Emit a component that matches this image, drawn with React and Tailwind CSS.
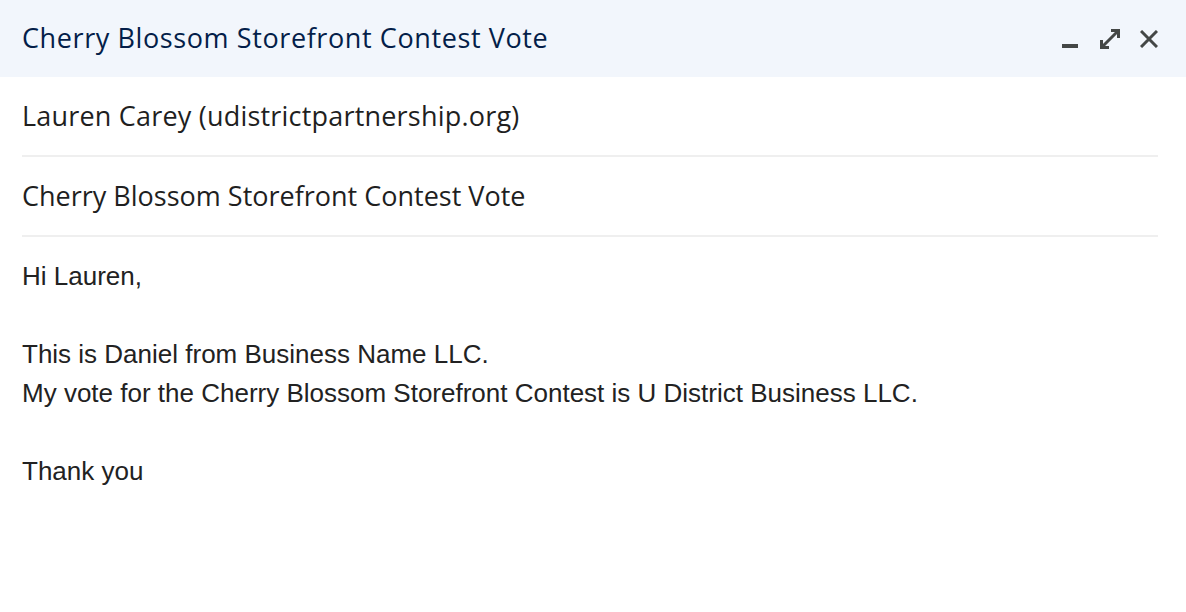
export default function App() {
  return (
    <div className="w-[1186px] h-[612px] bg-white overflow-hidden">
      <div className="h-[77px] bg-[#f2f6fc] flex items-center justify-between pl-[22px] pr-[28px]">
        <div className="text-[27px] text-[#041e49] font-['Open_Sans',sans-serif] tracking-[0.6px]">Cherry Blossom Storefront Contest Vote</div>
        <div className="flex items-center text-[#444746]">
          <svg className="mr-[22px]" width="16" height="20" viewBox="0 0 16 20"><rect x="0" y="15" width="16" height="4" fill="#444746" /></svg>
          <svg className="mr-[20px]" width="20" height="20" viewBox="0 0 20 20" fill="none" stroke="#444746" strokeWidth="3">
            <path d="M2 18 L18 2" />
            <path d="M11 1.5 H18.5 V9" />
            <path d="M1.5 11 V18.5 H9" />
          </svg>
          <svg width="18" height="18" viewBox="0 0 18 18" fill="none" stroke="#444746" strokeWidth="3">
            <path d="M1 1 L17 17 M17 1 L1 17" />
          </svg>
        </div>
      </div>
      <div className="ml-[22px] mr-[28px] font-['Open_Sans',sans-serif] text-[#1f1f1f] text-[27px]">
        <div className="h-[80px] flex items-center border-b-2 border-[#efefef] tracking-[0.2px]">Lauren Carey (udistrictpartnership.org)</div>
        <div className="h-[80px] flex items-center border-b-2 border-[#efefef]">Cherry Blossom Storefront Contest Vote</div>
      </div>
      <div className="px-[22px] pt-[20px] font-['Liberation_Sans',Arial,sans-serif] text-[26px] leading-[39px] text-[#222222]">
        <div>Hi Lauren,</div>
        <div className="h-[39px]"></div>
        <div>This is Daniel from Business Name LLC.</div>
        <div>My vote for the Cherry Blossom Storefront Contest is U District Business LLC.</div>
        <div className="h-[39px]"></div>
        <div>Thank you</div>
      </div>
    </div>
  );
}
